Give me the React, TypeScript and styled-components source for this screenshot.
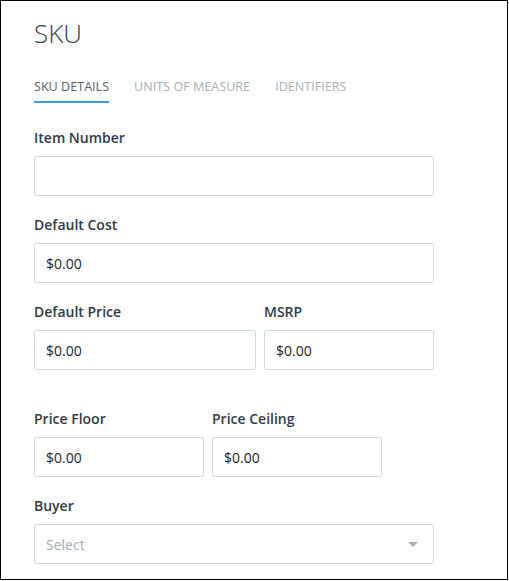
import React from 'react';
import styled, { createGlobalStyle } from 'styled-components';

const GlobalStyle = createGlobalStyle`
  html, body {
    margin: 0;
    padding: 0;
    background: #ffffff;
  }
  body {
    font-family: 'Open Sans', 'Liberation Sans', sans-serif;
  }
`;

const Frame = styled.div`
  box-sizing: border-box;
  width: 508px;
  height: 580px;
  border: 1px solid #000000;
  padding: 14px 0 0 33px;
  overflow: hidden;
`;

const Title = styled.h1`
  margin: 0;
  font-size: 26px;
  line-height: 36px;
  font-weight: 300;
  color: #35414c;
`;

const Tabs = styled.div`
  display: flex;
  gap: 25px;
  margin-top: 27px;
`;

const Tab = styled.div<{ $active?: boolean }>`
  font-size: 12.6px;
  line-height: 18px;
  padding-bottom: 5px;
  text-transform: uppercase;
  color: ${(p) => (p.$active ? '#56616b' : '#a9b0b7')};
  border-bottom: 2px solid ${(p) => (p.$active ? '#3a9be0' : 'transparent')};
`;

const Form = styled.div`
  width: 400px;
  margin-top: 25px;
  display: flex;
  flex-direction: column;
`;

const Row = styled.div<{ $cols: string; $top?: number }>`
  display: grid;
  grid-template-columns: ${(p) => p.$cols};
  column-gap: 8px;
  margin-top: ${(p) => p.$top ?? 19}px;
`;

const Field = styled.div`
  display: flex;
  flex-direction: column;
`;

const Label = styled.label`
  font-size: 14px;
  line-height: 20px;
  font-weight: 600;
  color: #2f3b46;
  margin-bottom: 8px;
`;

const Box = styled.div<{ $placeholder?: boolean }>`
  box-sizing: border-box;
  position: relative;
  height: 40px;
  border: 1px solid #cfdbe4;
  border-radius: 2px;
  padding: 0 11px;
  display: flex;
  align-items: center;
  font-size: 14px;
  color: ${(p) => (p.$placeholder ? '#a3abb3' : '#1f2328')};
`;

const Caret = styled.span`
  position: absolute;
  right: 15px;
  top: 17px;
  width: 0;
  height: 0;
  border-left: 5px solid transparent;
  border-right: 5px solid transparent;
  border-top: 5px solid #a9b0b7;
`;

const FormField: React.FC<{ label: string; value?: string }> = ({ label, value }) => (
  <Field>
    <Label>{label}</Label>
    <Box>{value}</Box>
  </Field>
);

export default function App() {
  return (
    <>
      <GlobalStyle />
      <Frame>
        <Title>SKU</Title>
        <Tabs>
          <Tab $active>SKU Details</Tab>
          <Tab>Units of Measure</Tab>
          <Tab>Identifiers</Tab>
        </Tabs>
        <Form>
          <Row $cols="400px" $top={0}>
            <FormField label="Item Number" />
          </Row>
          <Row $cols="400px">
            <FormField label="Default Cost" value="$0.00" />
          </Row>
          <Row $cols="222px 170px">
            <FormField label="Default Price" value="$0.00" />
            <FormField label="MSRP" value="$0.00" />
          </Row>
          <Row $cols="170px 170px" $top={39}>
            <FormField label="Price Floor" value="$0.00" />
            <FormField label="Price Ceiling" value="$0.00" />
          </Row>
          <Row $cols="400px">
            <Field>
              <Label>Buyer</Label>
              <Box $placeholder>
                Select
                <Caret />
              </Box>
            </Field>
          </Row>
        </Form>
      </Frame>
    </>
  );
}
